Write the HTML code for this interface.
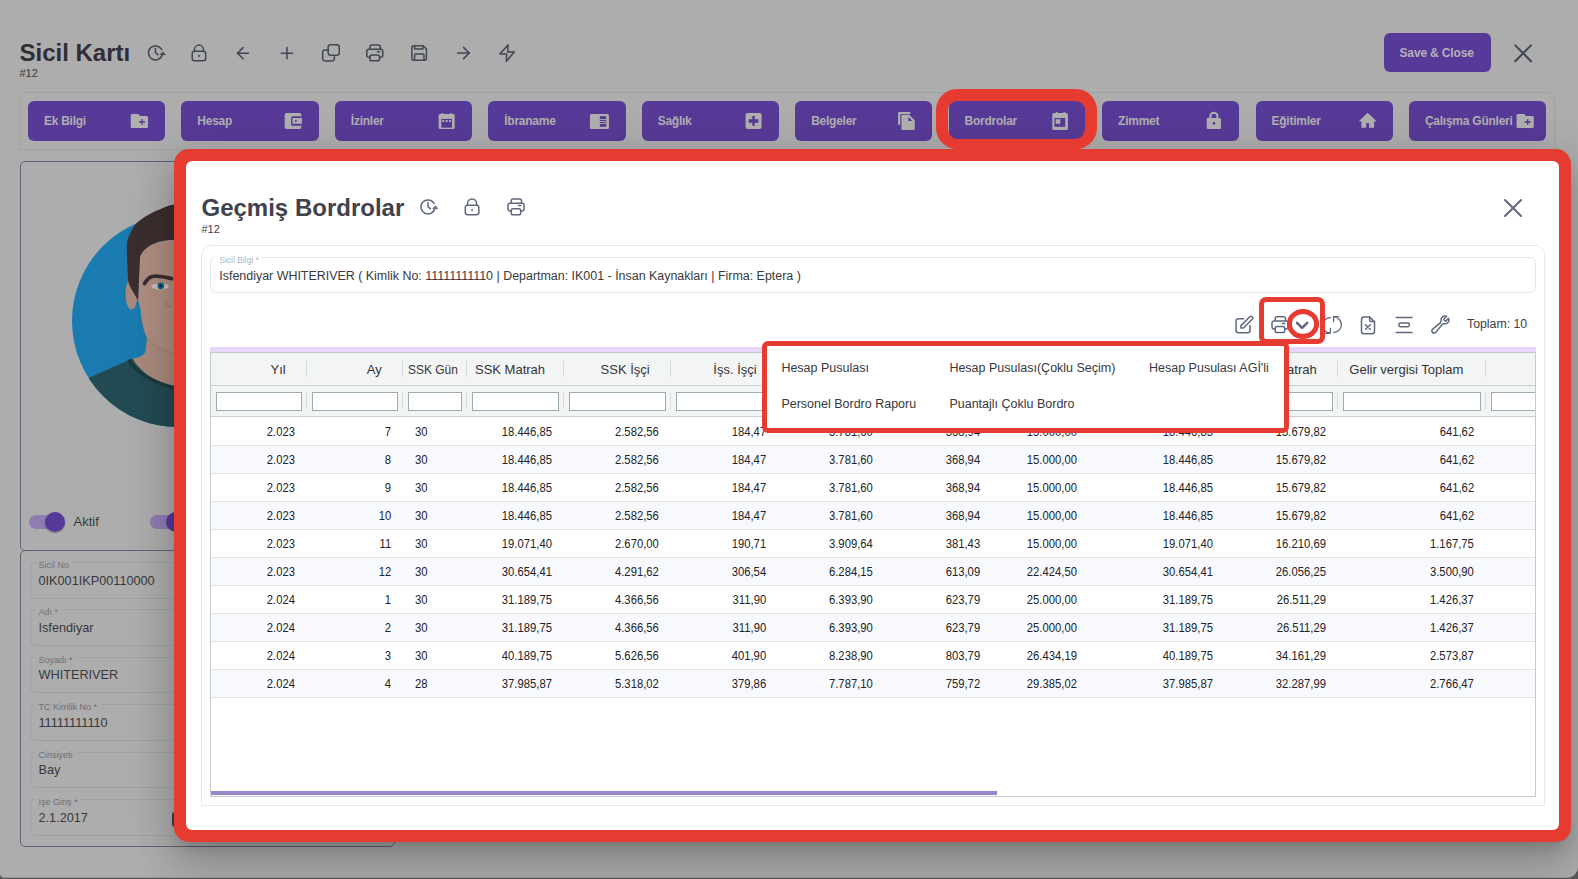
<!DOCTYPE html><html><head><meta charset="utf-8"><style>
html,body{margin:0;padding:0;}body{width:1578px;height:879px;overflow:hidden;position:relative;background:#adadad;font-family:"Liberation Sans", sans-serif;}
.t{position:absolute;white-space:nowrap;}
</style></head><body>
<div class="t" style="left:19.5px;top:42.60px;font-size:24px;line-height:20px;color:#2f2d38;font-weight:700;letter-spacing:0px;">Sicil Kartı</div>
<div class="t" style="left:19.5px;top:63.10px;font-size:11px;line-height:20px;color:#3a3a40;font-weight:400;letter-spacing:0px;">#12</div>
<div style="color:#404654">
<svg style="position:absolute;left:0;top:0" width="1578" height="879" viewBox="0 0 1578 879" fill="none" stroke="currentColor" stroke-width="1.5" stroke-linecap="round" stroke-linejoin="round"><g transform="translate(146 44)"><path d="M15.62 5.51 A7 7 0 1 0 16.43 9.87"/><path d="M17.1 7.9 L19.5 10.7 L14.4 10.5 Z" fill="currentColor" stroke="currentColor" stroke-width="0.6"/><path d="M9.45 4.6 V8.66 L11.9 10.7"/></g><g transform="translate(189.9 44.1)"><rect x="2.3" y="7.2" width="13.5" height="9.5" rx="2.2"/><path d="M4.5 7.2 V5.55 a4.55 4.55 0 0 1 9.1 0 V7.2"/><path d="M9.05 11.5 v1"/></g><path d="M237.5 53.2 H248.5"/><path d="M237.5 53.2 l5.6 -5.6"/><path d="M237.5 53.2 l5.6 5.6"/><path d="M287 47.6 V58.8"/><path d="M281.4 53.2 H292.6"/><rect x="328.15" y="44.65" width="11.1" height="10.7" rx="2.5"/><path d="M328.15 49.95 H325.15 a2.5 2.5 0 0 0 -2.5 2.5 V58.45 a2.5 2.5 0 0 0 2.5 2.5 H331.85 a2.5 2.5 0 0 0 2.5 -2.5 V56.85"/><g transform="translate(365.3 43.6)"><path d="M4.7 5.2 V3.3 a1.8 1.8 0 0 1 1.8 -1.8 h6.7 a1.8 1.8 0 0 1 1.8 1.8 V5.2"/><path d="M4.7 13.6 H3.3 a1.8 1.8 0 0 1 -1.8 -1.8 V7.7 a2 2 0 0 1 2 -2 H15.5 a2 2 0 0 1 2 2 V11.8 a1.8 1.8 0 0 1 -1.8 1.8 H14.2"/><rect x="4.7" y="11.3" width="9.5" height="5.9" rx="1.8"/><path d="M12 8.1 h2.4"/></g><path d="M413.85 45.75 H423.2 L426.45 49 V58.25 a2 2 0 0 1 -2 2 H413.85 a2 2 0 0 1 -2 -2 V47.75 a2 2 0 0 1 2 -2 z"/><path d="M414.6 45.9 V48.5 a.5 .5 0 0 0 .5 .5 H422.5 a.5 .5 0 0 0 .5 -.5 V45.9"/><path d="M414.6 60.1 V55 a1 1 0 0 1 1 -1 H423 a1 1 0 0 1 1 1 V60.1"/><path d="M457.6 53 H469.2"/><path d="M469.2 53 l-5.6 -5.6"/><path d="M469.2 53 l-5.6 5.6"/><path d="M508.1 44.8 L499.9 54.1 H506.6 L506.4 61.3 L514.3 51.9 H507.7 Z"/></svg>
</div>
<div style="position:absolute;left:1384px;top:33px;width:107px;height:38.5px;box-sizing:border-box;background:#573a97;border-radius:6px;"></div>
<div class="t" style="left:1399.5px;top:42.50px;font-size:12px;line-height:20px;color:#b4b1bb;font-weight:700;letter-spacing:-0.15px;">Save &amp; Close</div>
<svg style="position:absolute;left:0;top:0" width="1578" height="100" viewBox="0 0 1578 100" stroke="#3d4452" stroke-width="2" stroke-linecap="round"><path d="M1515.2 45.4 L1531 61.2 M1531 45.4 L1515.2 61.2"/></svg>
<div style="position:absolute;left:19px;top:92px;width:1536px;height:58px;box-sizing:border-box;border:1px solid #a0a3a6;border-radius:7px 7px 0 0;"></div>
<div style="position:absolute;left:28.0px;top:101px;width:137.2px;height:40px;box-sizing:border-box;background:#573a97;border-radius:6px;"></div>
<div class="t" style="left:43.9px;top:110.50px;font-size:12px;line-height:20px;color:#b0b0b0;font-weight:700;letter-spacing:-0.25px;">Ek Bilgi</div>
<svg style="position:absolute;left:28.00px;top:101px" width="137" height="40" viewBox="0 0 137 40" fill="#b0b0b0" stroke="none"><path d="M102.75 14.5 a1.5 1.5 0 0 1 1.5 -1.5 h6 l2 2 h6.25 a1.5 1.5 0 0 1 1.5 1.5 v9 a1.5 1.5 0 0 1 -1.5 1.5 h-14.25 a1.5 1.5 0 0 1 -1.5 -1.5 z"/><rect x="111" y="20.2" width="6" height="1.6" rx="0" fill="#573a97"/><rect x="113.3" y="18.2" width="1.4" height="5.6" rx="0" fill="#573a97"/></svg>
<div style="position:absolute;left:181.45px;top:101px;width:137.2px;height:40px;box-sizing:border-box;background:#573a97;border-radius:6px;"></div>
<div class="t" style="left:197.35px;top:110.50px;font-size:12px;line-height:20px;color:#b0b0b0;font-weight:700;letter-spacing:-0.25px;">Hesap</div>
<svg style="position:absolute;left:181.45px;top:101px" width="137" height="40" viewBox="0 0 137 40" fill="#b0b0b0" stroke="none"><rect x="103.65" y="11.9" width="16.7" height="16" rx="2" fill="#b0b0b0"/><path d="M110.1 16.8 a1.5 1.5 0 0 1 1.5 -1.5 h8.75 v9.45 h-8.75 a1.5 1.5 0 0 1 -1.5 -1.5z" fill="#573a97"/><rect x="111.45" y="17" width="9.4" height="5.8" rx="0" fill="#b0b0b0"/><circle cx="114.85" cy="19.9" r="1" fill="#573a97"/></svg>
<div style="position:absolute;left:334.9px;top:101px;width:137.2px;height:40px;box-sizing:border-box;background:#573a97;border-radius:6px;"></div>
<div class="t" style="left:350.8px;top:110.50px;font-size:12px;line-height:20px;color:#b0b0b0;font-weight:700;letter-spacing:-0.25px;">İzinler</div>
<svg style="position:absolute;left:334.90px;top:101px" width="137" height="40" viewBox="0 0 137 40" fill="#b0b0b0" stroke="none"><rect x="103.6" y="12.9" width="16.1" height="15" rx="1.5" fill="#b0b0b0"/><rect x="106.3" y="11.9" width="2" height="2.5" rx="1" fill="#b0b0b0"/><rect x="114.9" y="11.9" width="2" height="2.5" rx="1" fill="#b0b0b0"/><rect x="106.3" y="17.9" width="10.7" height="8.8" rx="0" fill="#573a97"/><rect x="107.2" y="19" width="2" height="2" rx="0" fill="#b0b0b0"/><rect x="110.6" y="19" width="2" height="2" rx="0" fill="#b0b0b0"/><rect x="114" y="19" width="2" height="2" rx="0" fill="#b0b0b0"/></svg>
<div style="position:absolute;left:488.35px;top:101px;width:137.2px;height:40px;box-sizing:border-box;background:#573a97;border-radius:6px;"></div>
<div class="t" style="left:504.25px;top:110.50px;font-size:12px;line-height:20px;color:#b0b0b0;font-weight:700;letter-spacing:-0.25px;">İbraname</div>
<svg style="position:absolute;left:488.35px;top:101px" width="137" height="40" viewBox="0 0 137 40" fill="#b0b0b0" stroke="none"><rect x="101.95" y="12.9" width="19" height="15" rx="1.5" fill="#b0b0b0"/><rect x="111.85" y="15.1" width="6.4" height="10.7" rx="0" fill="#573a97"/><rect x="111.85" y="18" width="6.4" height="0.9" rx="0" fill="#b0b0b0"/><rect x="111.85" y="20.1" width="6.4" height="0.9" rx="0" fill="#b0b0b0"/><rect x="111.85" y="22" width="6.4" height="0.9" rx="0" fill="#b0b0b0"/></svg>
<div style="position:absolute;left:641.8px;top:101px;width:137.2px;height:40px;box-sizing:border-box;background:#573a97;border-radius:6px;"></div>
<div class="t" style="left:657.7px;top:110.50px;font-size:12px;line-height:20px;color:#b0b0b0;font-weight:700;letter-spacing:-0.25px;">Sağlık</div>
<svg style="position:absolute;left:641.80px;top:101px" width="137" height="40" viewBox="0 0 137 40" fill="#b0b0b0" stroke="none"><rect x="103.6" y="11.9" width="16" height="16" rx="2" fill="#b0b0b0"/><rect x="106.7" y="18.2" width="9.7" height="3.6" rx="0" fill="#573a97"/><rect x="110.3" y="15" width="2.5" height="9.8" rx="0" fill="#573a97"/></svg>
<div style="position:absolute;left:795.25px;top:101px;width:137.2px;height:40px;box-sizing:border-box;background:#573a97;border-radius:6px;"></div>
<div class="t" style="left:811.15px;top:110.50px;font-size:12px;line-height:20px;color:#b0b0b0;font-weight:700;letter-spacing:-0.25px;">Belgeler</div>
<svg style="position:absolute;left:795.25px;top:101px" width="137" height="40" viewBox="0 0 137 40" fill="#b0b0b0" stroke="none"><path d="M103.05 23.8 v-11.8 a1 1 0 0 1 1 -1 h11.3 v2.2 h-10.1 v10.6z"/><path d="M106.45 15 a1 1 0 0 1 1 -1 h6.9 l5.4 5.3 v8.6 a1 1 0 0 1 -1 1 h-11.3 a1 1 0 0 1 -1 -1z"/><path d="M113.25 15.9 v4.1 h4.2z" fill="#573a97"/></svg>
<div style="position:absolute;left:948.7px;top:101px;width:137.2px;height:40px;box-sizing:border-box;background:#573a97;border-radius:6px;"></div>
<div class="t" style="left:964.6px;top:110.50px;font-size:12px;line-height:20px;color:#b0b0b0;font-weight:700;letter-spacing:-0.25px;">Bordrolar</div>
<svg style="position:absolute;left:948.70px;top:101px" width="137" height="40" viewBox="0 0 137 40" fill="#b0b0b0" stroke="none"><rect x="103.3" y="12" width="15.6" height="16.9" rx="1.5" fill="#b0b0b0"/><rect x="106.7" y="11" width="2" height="2.5" rx="1" fill="#b0b0b0"/><rect x="114.2" y="11" width="2" height="2.5" rx="1" fill="#b0b0b0"/><rect x="105.4" y="17" width="10.8" height="8.8" rx="0" fill="#573a97"/><rect x="106.7" y="18.2" width="4.6" height="4.6" rx="0" fill="#b0b0b0"/></svg>
<div style="position:absolute;left:1102.15px;top:101px;width:137.2px;height:40px;box-sizing:border-box;background:#573a97;border-radius:6px;"></div>
<div class="t" style="left:1118.05px;top:110.50px;font-size:12px;line-height:20px;color:#b0b0b0;font-weight:700;letter-spacing:-0.25px;">Zimmet</div>
<svg style="position:absolute;left:1102.15px;top:101px" width="137" height="40" viewBox="0 0 137 40" fill="#b0b0b0" stroke="none"><path d="M107.45 17.5 v-2.5 a4.45 4.2 0 0 1 8.9 0 v2.5 h-2 v-2.5 a2.45 2.2 0 0 0 -4.9 0 v2.5z"/><rect x="104.75" y="17.1" width="14.2" height="10.8" rx="1" fill="#b0b0b0"/><circle cx="111.95" cy="22.4" r="1.3" fill="#573a97"/></svg>
<div style="position:absolute;left:1255.6px;top:101px;width:137.2px;height:40px;box-sizing:border-box;background:#573a97;border-radius:6px;"></div>
<div class="t" style="left:1271.5px;top:110.50px;font-size:12px;line-height:20px;color:#b0b0b0;font-weight:700;letter-spacing:-0.25px;">Eğitimler</div>
<svg style="position:absolute;left:1255.60px;top:101px" width="137" height="40" viewBox="0 0 137 40" fill="#b0b0b0" stroke="none"><path d="M111.65 11.8 L120.6 20.2 L118.1 20.5 V26.8 H113.1 V22 H110.2 V26.8 H105.4 V20.5 L102.7 20.2 Z"/></svg>
<div style="position:absolute;left:1409.05px;top:101px;width:137.2px;height:40px;box-sizing:border-box;background:#573a97;border-radius:6px;"></div>
<div class="t" style="left:1424.95px;top:110.50px;font-size:12px;line-height:20px;color:#b0b0b0;font-weight:700;letter-spacing:-0.25px;">Çalışma Günleri</div>
<svg style="position:absolute;left:1409.05px;top:101px" width="137" height="40" viewBox="0 0 137 40" fill="#b0b0b0" stroke="none"><path d="M107.55 14.5 a1.5 1.5 0 0 1 1.5 -1.5 h6 l2 2 h6.25 a1.5 1.5 0 0 1 1.5 1.5 v9 a1.5 1.5 0 0 1 -1.5 1.5 h-14.25 a1.5 1.5 0 0 1 -1.5 -1.5 z"/><rect x="115.65" y="20.2" width="6" height="1.6" rx="0" fill="#573a97"/><rect x="117.95" y="18.2" width="1.4" height="5.6" rx="0" fill="#573a97"/></svg>
<div style="position:absolute;left:20px;top:161px;width:375px;height:389.5px;box-sizing:border-box;border:1.5px solid #5a6675;border-radius:5px;"></div>
<svg style="position:absolute;left:0;top:0" width="180" height="440" viewBox="0 0 180 440">
<defs><clipPath id="cc"><circle cx="178" cy="321" r="106"/></clipPath></defs>
<circle cx="178" cy="321" r="106" fill="#1a7bb0"/>
<g clip-path="url(#cc)">
<path d="M146.9 337.8 L145.3 352 C143 356 138 358 132.5 358.5 C140 372 155 383 180 388 L180 330 Z" fill="#a98a7d"/>
<path d="M40 440 L60 420 L89.6 377.6 L132.5 358.5 C140 372 155 383 180 388 L180 440 Z" fill="#234b53"/>
<path d="M129 359.5 C134 370 150 383 180 389" stroke="#1b3a40" stroke-width="3.5" fill="none"/>
</g>
<ellipse cx="131.5" cy="294" rx="6" ry="15.5" fill="#a9897c"/>
<path d="M180 239.8 L174 239.8 C160 240 146 244 140 256 L138 300 L140.5 309 C141.5 318 142 327 146.9 337.8 C155 346 165 351 180 354 Z" fill="#ae8e81"/>
<path d="M146.9 337.8 C155 347 165 352 180 354" stroke="#9d7a6c" stroke-width="0.8" fill="none"/>
<path d="M168.5 205.8 L180 203 L180 239.8 L174 239.8 C160 240 146 244 140 256 L138 300 C133 292 128 285 127.9 278.6 L126.7 247.6 C127 240 129 235 130.9 232 C133 227 136 223 138.7 221.3 C148 214 158 210 168.5 205.8 Z" fill="#3b2e2e"/>
<path d="M144.6 283.4 C148 278 151 276.2 154.2 276.2 C160 276 166 277 171.5 278.6" stroke="#3b2e2e" stroke-width="3.8" fill="none" stroke-linecap="round"/>
<ellipse cx="160" cy="286.4" rx="8.5" ry="3" fill="#c8bfbb"/><circle cx="160.8" cy="285.9" r="3.3" fill="#185f85"/><circle cx="160.8" cy="285.9" r="1.3" fill="#0d2a3a"/>
<path d="M167 300 C164.5 303 166 307 170.5 306.5" stroke="#8e7064" stroke-width="1" fill="none"/>
<ellipse cx="171" cy="323.4" rx="8" ry="2.8" fill="#b38a80"/>
</svg>
<div style="position:absolute;left:29px;top:514.7px;width:36px;height:14px;box-sizing:border-box;background:#8f7cb3;border-radius:7px;"></div>
<div style="position:absolute;left:45px;top:511.7px;width:20px;height:20px;box-sizing:border-box;background:#553a98;border-radius:50%;box-shadow:0 1px 2px rgba(0,0,0,.3);"></div>
<div class="t" style="left:73.5px;top:511.70px;font-size:13px;line-height:20px;color:#3a3a3e;font-weight:400;letter-spacing:0px;">Aktif</div>
<div style="position:absolute;left:150px;top:514.7px;width:36px;height:14px;box-sizing:border-box;background:#8f7cb3;border-radius:7px;"></div>
<div style="position:absolute;left:166px;top:511.7px;width:20px;height:20px;box-sizing:border-box;background:#553a98;border-radius:50%;"></div>
<div style="position:absolute;left:20px;top:550px;width:375px;height:297px;box-sizing:border-box;border:1.5px solid #5a6675;border-radius:5px;"></div>
<div style="position:absolute;left:29.5px;top:562.0px;width:360px;height:36.5px;box-sizing:border-box;border:1px solid #9ea2a7;border-radius:5px;"></div>
<div class="t" style="left:34.5px;top:561.80px;font-size:9px;line-height:6px;color:#6f7075;font-weight:400;letter-spacing:0px;background:#adadad;padding:0 3.5px 0 4px;">Sicil No</div>
<div class="t" style="left:38.5px;top:570.50px;font-size:12.7px;line-height:20px;color:#38383c;font-weight:400;letter-spacing:0px;">0IK001IKP00110000</div>
<div style="position:absolute;left:29.5px;top:609.45px;width:360px;height:36.5px;box-sizing:border-box;border:1px solid #9ea2a7;border-radius:5px;"></div>
<div class="t" style="left:34.5px;top:609.25px;font-size:9px;line-height:6px;color:#6f7075;font-weight:400;letter-spacing:0px;background:#adadad;padding:0 3.5px 0 4px;">Adı *</div>
<div class="t" style="left:38.5px;top:617.95px;font-size:12.7px;line-height:20px;color:#38383c;font-weight:400;letter-spacing:0px;">Isfendiyar</div>
<div style="position:absolute;left:29.5px;top:656.9px;width:360px;height:36.5px;box-sizing:border-box;border:1px solid #9ea2a7;border-radius:5px;"></div>
<div class="t" style="left:34.5px;top:656.70px;font-size:9px;line-height:6px;color:#6f7075;font-weight:400;letter-spacing:0px;background:#adadad;padding:0 3.5px 0 4px;">Soyadı *</div>
<div class="t" style="left:38.5px;top:665.40px;font-size:12.7px;line-height:20px;color:#38383c;font-weight:400;letter-spacing:0px;">WHITERIVER</div>
<div style="position:absolute;left:29.5px;top:704.35px;width:360px;height:36.5px;box-sizing:border-box;border:1px solid #9ea2a7;border-radius:5px;"></div>
<div class="t" style="left:34.5px;top:704.15px;font-size:9px;line-height:6px;color:#6f7075;font-weight:400;letter-spacing:0px;background:#adadad;padding:0 3.5px 0 4px;">TC Kimlik No *</div>
<div class="t" style="left:38.5px;top:712.85px;font-size:12.7px;line-height:20px;color:#38383c;font-weight:400;letter-spacing:0px;">11111111110</div>
<div style="position:absolute;left:29.5px;top:751.8px;width:360px;height:36.5px;box-sizing:border-box;border:1px solid #9ea2a7;border-radius:5px;"></div>
<div class="t" style="left:34.5px;top:751.60px;font-size:9px;line-height:6px;color:#6f7075;font-weight:400;letter-spacing:0px;background:#adadad;padding:0 3.5px 0 4px;">Cinsiyeti</div>
<div class="t" style="left:38.5px;top:760.30px;font-size:12.7px;line-height:20px;color:#38383c;font-weight:400;letter-spacing:0px;">Bay</div>
<div style="position:absolute;left:29.5px;top:799.25px;width:360px;height:36.5px;box-sizing:border-box;border:1px solid #9ea2a7;border-radius:5px;"></div>
<div class="t" style="left:34.5px;top:799.05px;font-size:9px;line-height:6px;color:#6f7075;font-weight:400;letter-spacing:0px;background:#adadad;padding:0 3.5px 0 4px;">Işe Giriş *</div>
<div class="t" style="left:38.5px;top:807.75px;font-size:12.7px;line-height:20px;color:#38383c;font-weight:400;letter-spacing:0px;">2.1.2017</div>
<div style="position:absolute;left:172.3px;top:811.5px;width:6px;height:15px;box-sizing:border-box;background:#3c4350;border-radius:3px;"></div>
<div style="position:absolute;left:174px;top:149px;width:1397px;height:693px;box-sizing:border-box;background:#e53b30;border-radius:15px;box-shadow:0 11px 15px -7px rgba(0,0,0,.16),0 24px 38px 3px rgba(0,0,0,.12),0 9px 46px 8px rgba(0,0,0,.11);"></div>
<div style="position:absolute;left:186px;top:161px;width:1373px;height:669px;box-sizing:border-box;background:#fff;border-radius:6px;"></div>
<div class="t" style="left:201.5px;top:197.60px;font-size:24px;line-height:20px;color:#42414d;font-weight:700;letter-spacing:0px;">Geçmiş Bordrolar</div>
<div class="t" style="left:201.5px;top:219.20px;font-size:11px;line-height:20px;color:#3d3c48;font-weight:400;letter-spacing:0px;">#12</div>
<svg style="position:absolute;left:0;top:0" width="1578" height="300" viewBox="0 0 1578 300" stroke="#5f6a7e" stroke-width="2" stroke-linecap="round"><path d="M1505 200 L1521.1 216 M1521.1 200 L1505 216"/></svg>
<div style="position:absolute;left:201px;top:245px;width:1344px;height:561px;box-sizing:border-box;border:1px solid #e8e9ef;border-radius:10px 10px 0 0;"></div>
<div style="position:absolute;left:210px;top:257px;width:1326px;height:36px;box-sizing:border-box;border:1px solid #e4e6eb;border-radius:6px;"></div>
<div class="t" style="left:215.3px;top:256.60px;font-size:8.5px;line-height:6px;color:#b3b3b8;font-weight:400;letter-spacing:0px;background:#fff;padding:0 3.5px 0 4px;">Sicil Bilgi *</div>
<div class="t" style="left:219.3px;top:265.60px;font-size:12.45px;line-height:20px;color:#3a3a40;font-weight:400;letter-spacing:0px;">Isfendiyar WHITERIVER ( Kimlik No: 11111111110 | Departman: IK001 - İnsan Kaynakları | Firma: Eptera )</div>
<div style="color:#5e697d">
<svg style="position:absolute;left:0;top:0" width="1578" height="879" viewBox="0 0 1578 879" fill="none" stroke="currentColor" stroke-width="1.5" stroke-linecap="round" stroke-linejoin="round"><g transform="translate(418.5 198)"><path d="M15.62 5.51 A7 7 0 1 0 16.43 9.87"/><path d="M17.1 7.9 L19.5 10.7 L14.4 10.5 Z" fill="currentColor" stroke="currentColor" stroke-width="0.6"/><path d="M9.45 4.6 V8.66 L11.9 10.7"/></g><g transform="translate(463 198)"><rect x="2.3" y="7.2" width="13.5" height="9.5" rx="2.2"/><path d="M4.5 7.2 V5.55 a4.55 4.55 0 0 1 9.1 0 V7.2"/><path d="M9.05 11.5 v1"/></g><g transform="translate(506.5 197.5)"><path d="M4.7 5.2 V3.3 a1.8 1.8 0 0 1 1.8 -1.8 h6.7 a1.8 1.8 0 0 1 1.8 1.8 V5.2"/><path d="M4.7 13.6 H3.3 a1.8 1.8 0 0 1 -1.8 -1.8 V7.7 a2 2 0 0 1 2 -2 H15.5 a2 2 0 0 1 2 2 V11.8 a1.8 1.8 0 0 1 -1.8 1.8 H14.2"/><rect x="4.7" y="11.3" width="9.5" height="5.9" rx="1.8"/><path d="M12 8.1 h2.4"/></g><g transform="translate(1230 310)"><path d="M13.6 8.75 H8.55 a2.5 2.5 0 0 0 -2.5 2.5 V20.25 a2.5 2.5 0 0 0 2.5 2.5 H17.55 a2.5 2.5 0 0 0 2.5 -2.5 V15.4"/><path d="M10.9 18 V15.6 L19.8 6.8 a1.75 1.75 0 0 1 2.5 2.5 L13.4 18 Z"/></g><g transform="translate(1270.5 315.3)"><path d="M4.7 5.2 V3.3 a1.8 1.8 0 0 1 1.8 -1.8 h6.7 a1.8 1.8 0 0 1 1.8 1.8 V5.2"/><path d="M4.7 13.6 H3.3 a1.8 1.8 0 0 1 -1.8 -1.8 V7.7 a2 2 0 0 1 2 -2 H15.5 a2 2 0 0 1 2 2 V11.8 a1.8 1.8 0 0 1 -1.8 1.8 H14.2"/><rect x="4.7" y="11.3" width="9.5" height="5.9" rx="1.8"/><path d="M12 8.1 h2.4"/></g><path d="M1297 322.8 L1302.1 327.9 L1307.2 322.8" stroke-width="2.6"/><g transform="translate(1322 315) scale(0.8333)"><path d="M10.3 3.2 A9 9 0 0 0 9.6 21.6"/><path d="M4 22 H10 V16"/><path d="M13.7 20.8 A9 9 0 0 0 14.4 2.4"/><path d="M20.2 2 H13.9 V8"/></g><g transform="translate(1355 308)"><path d="M14.6 8.95 h-5.6 a2.5 2.5 0 0 0 -2.5 2.5 v11.75 a2.5 2.5 0 0 0 2.5 2.5 h8 a2.5 2.5 0 0 0 2.5 -2.5 v-9.4 z"/><path d="M14.6 8.95 v3 a1.5 1.5 0 0 0 1.5 1.5 h3.4"/><path d="M10.5 16.8 l4.9 4.5 m0 -4.5 l-4.9 4.5"/></g><g transform="translate(1355 308)"><path d="M41.2 9.5 H57"/><path d="M41.2 24.4 H57"/><rect x="43.85" y="15.05" width="10.5" height="3.8" rx="1.6"/></g><g transform="translate(1429.9 314) scale(0.875)" stroke-width="1.75"><path d="M21.75 6.75a4.5 4.5 0 01-4.884 4.484c-1.076-.091-2.264.071-2.95.904l-7.152 8.684a2.548 2.548 0 11-3.586-3.586l8.684-7.152c.833-.686.995-1.874.904-2.95a4.5 4.5 0 016.336-4.486l-3.276 3.276a3.004 3.004 0 002.25 2.25l3.276-3.276c.256.565.398 1.192.398 1.852z"/></g></svg>
</div>
<div class="t" style="left:1467px;top:313.50px;font-size:12.3px;line-height:20px;color:#3d3d45;font-weight:400;letter-spacing:0px;">Toplam: 10</div>
<div style="position:absolute;left:210px;top:347px;width:1326px;height:5px;box-sizing:border-box;background:#e7d6f9;"></div>
<div style="position:absolute;left:210px;top:352px;width:1326px;height:445px;box-sizing:border-box;border:1px solid #c3cbcc;border-top:1px solid #bfc8c8;"></div>
<div style="position:absolute;left:211px;top:352.5px;width:1324px;height:63.5px;box-sizing:border-box;background:#f3f5f5;"></div>
<div style="position:absolute;left:211px;top:385px;width:1324px;height:1px;box-sizing:border-box;background:#c9d0d1;"></div>
<div style="position:absolute;left:211px;top:416px;width:1324px;height:1px;box-sizing:border-box;background:#c9d0d1;"></div>
<div class="t" style="right:1292.3px;top:360.30px;font-size:13px;line-height:20px;color:#333337;font-weight:400;letter-spacing:0px;text-align:right;">Yıl</div>
<div style="position:absolute;left:216.2px;top:392.3px;width:85.5px;height:18.5px;box-sizing:border-box;border:1px solid #9cacad;background:#fff;"></div>
<div style="position:absolute;left:306.0px;top:361px;width:1px;height:16px;box-sizing:border-box;background:#d6dcdc;"></div>
<div style="position:absolute;left:306.0px;top:393px;width:1px;height:16px;box-sizing:border-box;background:#d6dcdc;"></div>
<div class="t" style="right:1196.3px;top:360.30px;font-size:13px;line-height:20px;color:#333337;font-weight:400;letter-spacing:0px;text-align:right;">Ay</div>
<div style="position:absolute;left:311.7px;top:392.3px;width:86.0px;height:18.5px;box-sizing:border-box;border:1px solid #9cacad;background:#fff;"></div>
<div style="position:absolute;left:402.0px;top:361px;width:1px;height:16px;box-sizing:border-box;background:#d6dcdc;"></div>
<div style="position:absolute;left:402.0px;top:393px;width:1px;height:16px;box-sizing:border-box;background:#d6dcdc;"></div>
<div class="t" style="left:408px;top:360.30px;font-size:13px;line-height:20px;color:#333337;font-weight:400;letter-spacing:0px;transform:scaleX(0.92);transform-origin:0 50%;">SSK Gün</div>
<div style="position:absolute;left:407.7px;top:392.3px;width:54.0px;height:18.5px;box-sizing:border-box;border:1px solid #9cacad;background:#fff;"></div>
<div style="position:absolute;left:466.0px;top:361px;width:1px;height:16px;box-sizing:border-box;background:#d6dcdc;"></div>
<div style="position:absolute;left:466.0px;top:393px;width:1px;height:16px;box-sizing:border-box;background:#d6dcdc;"></div>
<div class="t" style="left:475px;top:360.30px;font-size:13px;line-height:20px;color:#333337;font-weight:400;letter-spacing:0px;">SSK Matrah</div>
<div style="position:absolute;left:471.7px;top:392.3px;width:87.0px;height:18.5px;box-sizing:border-box;border:1px solid #9cacad;background:#fff;"></div>
<div style="position:absolute;left:563.0px;top:361px;width:1px;height:16px;box-sizing:border-box;background:#d6dcdc;"></div>
<div style="position:absolute;left:563.0px;top:393px;width:1px;height:16px;box-sizing:border-box;background:#d6dcdc;"></div>
<div class="t" style="right:928.3px;top:360.30px;font-size:13px;line-height:20px;color:#333337;font-weight:400;letter-spacing:0px;text-align:right;">SSK İşçi</div>
<div style="position:absolute;left:568.7px;top:392.3px;width:97.0px;height:18.5px;box-sizing:border-box;border:1px solid #9cacad;background:#fff;"></div>
<div style="position:absolute;left:670.0px;top:361px;width:1px;height:16px;box-sizing:border-box;background:#d6dcdc;"></div>
<div style="position:absolute;left:670.0px;top:393px;width:1px;height:16px;box-sizing:border-box;background:#d6dcdc;"></div>
<div class="t" style="right:821.3px;top:360.30px;font-size:13px;line-height:20px;color:#333337;font-weight:400;letter-spacing:0px;text-align:right;">İşs. İşçi</div>
<div style="position:absolute;left:675.7px;top:392.3px;width:97.0px;height:18.5px;box-sizing:border-box;border:1px solid #9cacad;background:#fff;"></div>
<div style="position:absolute;left:777.0px;top:361px;width:1px;height:16px;box-sizing:border-box;background:#d6dcdc;"></div>
<div style="position:absolute;left:777.0px;top:393px;width:1px;height:16px;box-sizing:border-box;background:#d6dcdc;"></div>
<div class="t" style="right:714.3px;top:360.30px;font-size:13px;line-height:20px;color:#333337;font-weight:400;letter-spacing:0px;text-align:right;">SSK İşveren</div>
<div style="position:absolute;left:782.7px;top:392.3px;width:97.0px;height:18.5px;box-sizing:border-box;border:1px solid #9cacad;background:#fff;"></div>
<div style="position:absolute;left:884.0px;top:361px;width:1px;height:16px;box-sizing:border-box;background:#d6dcdc;"></div>
<div style="position:absolute;left:884.0px;top:393px;width:1px;height:16px;box-sizing:border-box;background:#d6dcdc;"></div>
<div class="t" style="right:607.3px;top:360.30px;font-size:13px;line-height:20px;color:#333337;font-weight:400;letter-spacing:0px;text-align:right;">İşs. İşveren</div>
<div style="position:absolute;left:889.7px;top:392.3px;width:97.0px;height:18.5px;box-sizing:border-box;border:1px solid #9cacad;background:#fff;"></div>
<div style="position:absolute;left:991.0px;top:361px;width:1px;height:16px;box-sizing:border-box;background:#d6dcdc;"></div>
<div style="position:absolute;left:991.0px;top:393px;width:1px;height:16px;box-sizing:border-box;background:#d6dcdc;"></div>
<div class="t" style="right:510.29999999999995px;top:360.30px;font-size:13px;line-height:20px;color:#333337;font-weight:400;letter-spacing:0px;text-align:right;">Asgari Ücret</div>
<div style="position:absolute;left:996.7px;top:392.3px;width:87.0px;height:18.5px;box-sizing:border-box;border:1px solid #9cacad;background:#fff;"></div>
<div style="position:absolute;left:1088.0px;top:361px;width:1px;height:16px;box-sizing:border-box;background:#d6dcdc;"></div>
<div style="position:absolute;left:1088.0px;top:393px;width:1px;height:16px;box-sizing:border-box;background:#d6dcdc;"></div>
<div class="t" style="right:374.29999999999995px;top:360.30px;font-size:13px;line-height:20px;color:#333337;font-weight:400;letter-spacing:0px;text-align:right;">Vergi Matrah</div>
<div style="position:absolute;left:1093.7px;top:392.3px;width:126.0px;height:18.5px;box-sizing:border-box;border:1px solid #9cacad;background:#fff;"></div>
<div style="position:absolute;left:1224.0px;top:361px;width:1px;height:16px;box-sizing:border-box;background:#d6dcdc;"></div>
<div style="position:absolute;left:1224.0px;top:393px;width:1px;height:16px;box-sizing:border-box;background:#d6dcdc;"></div>
<div class="t" style="right:261.29999999999995px;top:360.30px;font-size:13px;line-height:20px;color:#333337;font-weight:400;letter-spacing:0px;text-align:right;">GV Matrah</div>
<div style="position:absolute;left:1229.7px;top:392.3px;width:103.0px;height:18.5px;box-sizing:border-box;border:1px solid #9cacad;background:#fff;"></div>
<div style="position:absolute;left:1337.0px;top:361px;width:1px;height:16px;box-sizing:border-box;background:#d6dcdc;"></div>
<div style="position:absolute;left:1337.0px;top:393px;width:1px;height:16px;box-sizing:border-box;background:#d6dcdc;"></div>
<div class="t" style="left:1349.3px;top:360.30px;font-size:13px;line-height:20px;color:#333337;font-weight:400;letter-spacing:0px;">Gelir vergisi Toplam</div>
<div style="position:absolute;left:1342.7px;top:392.3px;width:138.0px;height:18.5px;box-sizing:border-box;border:1px solid #9cacad;background:#fff;"></div>
<div style="position:absolute;left:1485.0px;top:361px;width:1px;height:16px;box-sizing:border-box;background:#d6dcdc;"></div>
<div style="position:absolute;left:1485.0px;top:393px;width:1px;height:16px;box-sizing:border-box;background:#d6dcdc;"></div>
<div style="position:absolute;left:1490.7px;top:392.3px;width:44.3px;height:18.5px;box-sizing:border-box;border:1px solid #9cacad;background:#fff;border-right:none;"></div>
<div style="position:absolute;left:211px;top:445px;width:1324px;height:28px;box-sizing:border-box;background:#f8f9fc;"></div>
<div style="position:absolute;left:211px;top:501px;width:1324px;height:28px;box-sizing:border-box;background:#f8f9fc;"></div>
<div style="position:absolute;left:211px;top:557px;width:1324px;height:28px;box-sizing:border-box;background:#f8f9fc;"></div>
<div style="position:absolute;left:211px;top:613px;width:1324px;height:28px;box-sizing:border-box;background:#f8f9fc;"></div>
<div style="position:absolute;left:211px;top:669px;width:1324px;height:28px;box-sizing:border-box;background:#f8f9fc;"></div>
<div style="position:absolute;left:211px;top:445px;width:1324px;height:1px;box-sizing:border-box;background:#dfe3e6;"></div>
<div style="position:absolute;left:211px;top:473px;width:1324px;height:1px;box-sizing:border-box;background:#dfe3e6;"></div>
<div style="position:absolute;left:211px;top:501px;width:1324px;height:1px;box-sizing:border-box;background:#dfe3e6;"></div>
<div style="position:absolute;left:211px;top:529px;width:1324px;height:1px;box-sizing:border-box;background:#dfe3e6;"></div>
<div style="position:absolute;left:211px;top:557px;width:1324px;height:1px;box-sizing:border-box;background:#dfe3e6;"></div>
<div style="position:absolute;left:211px;top:585px;width:1324px;height:1px;box-sizing:border-box;background:#dfe3e6;"></div>
<div style="position:absolute;left:211px;top:613px;width:1324px;height:1px;box-sizing:border-box;background:#dfe3e6;"></div>
<div style="position:absolute;left:211px;top:641px;width:1324px;height:1px;box-sizing:border-box;background:#dfe3e6;"></div>
<div style="position:absolute;left:211px;top:669px;width:1324px;height:1px;box-sizing:border-box;background:#dfe3e6;"></div>
<div style="position:absolute;left:211px;top:697px;width:1324px;height:1px;box-sizing:border-box;background:#dfe3e6;"></div>
<div class="t" style="right:1283.1px;top:421.90px;font-size:12.8px;line-height:20px;color:#222226;font-weight:400;letter-spacing:0px;text-align:right;transform:scaleX(0.88);transform-origin:100% 50%;">2.023</div>
<div class="t" style="right:1187.1px;top:421.90px;font-size:12.8px;line-height:20px;color:#222226;font-weight:400;letter-spacing:0px;text-align:right;transform:scaleX(0.88);transform-origin:100% 50%;">7</div>
<div class="t" style="left:415px;top:421.90px;font-size:12.8px;line-height:20px;color:#222226;font-weight:400;letter-spacing:0px;transform:scaleX(0.88);transform-origin:0 50%;">30</div>
<div class="t" style="right:1026.1px;top:421.90px;font-size:12.8px;line-height:20px;color:#222226;font-weight:400;letter-spacing:0px;text-align:right;transform:scaleX(0.88);transform-origin:100% 50%;">18.446,85</div>
<div class="t" style="right:919.1px;top:421.90px;font-size:12.8px;line-height:20px;color:#222226;font-weight:400;letter-spacing:0px;text-align:right;transform:scaleX(0.88);transform-origin:100% 50%;">2.582,56</div>
<div class="t" style="right:812.1px;top:421.90px;font-size:12.8px;line-height:20px;color:#222226;font-weight:400;letter-spacing:0px;text-align:right;transform:scaleX(0.88);transform-origin:100% 50%;">184,47</div>
<div class="t" style="right:705.1px;top:421.90px;font-size:12.8px;line-height:20px;color:#222226;font-weight:400;letter-spacing:0px;text-align:right;transform:scaleX(0.88);transform-origin:100% 50%;">3.781,60</div>
<div class="t" style="right:598.1px;top:421.90px;font-size:12.8px;line-height:20px;color:#222226;font-weight:400;letter-spacing:0px;text-align:right;transform:scaleX(0.88);transform-origin:100% 50%;">368,94</div>
<div class="t" style="right:501.0999999999999px;top:421.90px;font-size:12.8px;line-height:20px;color:#222226;font-weight:400;letter-spacing:0px;text-align:right;transform:scaleX(0.88);transform-origin:100% 50%;">15.000,00</div>
<div class="t" style="right:365.0999999999999px;top:421.90px;font-size:12.8px;line-height:20px;color:#222226;font-weight:400;letter-spacing:0px;text-align:right;transform:scaleX(0.88);transform-origin:100% 50%;">18.446,85</div>
<div class="t" style="right:252.0999999999999px;top:421.90px;font-size:12.8px;line-height:20px;color:#222226;font-weight:400;letter-spacing:0px;text-align:right;transform:scaleX(0.88);transform-origin:100% 50%;">15.679,82</div>
<div class="t" style="right:104.09999999999991px;top:421.90px;font-size:12.8px;line-height:20px;color:#222226;font-weight:400;letter-spacing:0px;text-align:right;transform:scaleX(0.88);transform-origin:100% 50%;">641,62</div>
<div class="t" style="right:1283.1px;top:449.90px;font-size:12.8px;line-height:20px;color:#222226;font-weight:400;letter-spacing:0px;text-align:right;transform:scaleX(0.88);transform-origin:100% 50%;">2.023</div>
<div class="t" style="right:1187.1px;top:449.90px;font-size:12.8px;line-height:20px;color:#222226;font-weight:400;letter-spacing:0px;text-align:right;transform:scaleX(0.88);transform-origin:100% 50%;">8</div>
<div class="t" style="left:415px;top:449.90px;font-size:12.8px;line-height:20px;color:#222226;font-weight:400;letter-spacing:0px;transform:scaleX(0.88);transform-origin:0 50%;">30</div>
<div class="t" style="right:1026.1px;top:449.90px;font-size:12.8px;line-height:20px;color:#222226;font-weight:400;letter-spacing:0px;text-align:right;transform:scaleX(0.88);transform-origin:100% 50%;">18.446,85</div>
<div class="t" style="right:919.1px;top:449.90px;font-size:12.8px;line-height:20px;color:#222226;font-weight:400;letter-spacing:0px;text-align:right;transform:scaleX(0.88);transform-origin:100% 50%;">2.582,56</div>
<div class="t" style="right:812.1px;top:449.90px;font-size:12.8px;line-height:20px;color:#222226;font-weight:400;letter-spacing:0px;text-align:right;transform:scaleX(0.88);transform-origin:100% 50%;">184,47</div>
<div class="t" style="right:705.1px;top:449.90px;font-size:12.8px;line-height:20px;color:#222226;font-weight:400;letter-spacing:0px;text-align:right;transform:scaleX(0.88);transform-origin:100% 50%;">3.781,60</div>
<div class="t" style="right:598.1px;top:449.90px;font-size:12.8px;line-height:20px;color:#222226;font-weight:400;letter-spacing:0px;text-align:right;transform:scaleX(0.88);transform-origin:100% 50%;">368,94</div>
<div class="t" style="right:501.0999999999999px;top:449.90px;font-size:12.8px;line-height:20px;color:#222226;font-weight:400;letter-spacing:0px;text-align:right;transform:scaleX(0.88);transform-origin:100% 50%;">15.000,00</div>
<div class="t" style="right:365.0999999999999px;top:449.90px;font-size:12.8px;line-height:20px;color:#222226;font-weight:400;letter-spacing:0px;text-align:right;transform:scaleX(0.88);transform-origin:100% 50%;">18.446,85</div>
<div class="t" style="right:252.0999999999999px;top:449.90px;font-size:12.8px;line-height:20px;color:#222226;font-weight:400;letter-spacing:0px;text-align:right;transform:scaleX(0.88);transform-origin:100% 50%;">15.679,82</div>
<div class="t" style="right:104.09999999999991px;top:449.90px;font-size:12.8px;line-height:20px;color:#222226;font-weight:400;letter-spacing:0px;text-align:right;transform:scaleX(0.88);transform-origin:100% 50%;">641,62</div>
<div class="t" style="right:1283.1px;top:477.90px;font-size:12.8px;line-height:20px;color:#222226;font-weight:400;letter-spacing:0px;text-align:right;transform:scaleX(0.88);transform-origin:100% 50%;">2.023</div>
<div class="t" style="right:1187.1px;top:477.90px;font-size:12.8px;line-height:20px;color:#222226;font-weight:400;letter-spacing:0px;text-align:right;transform:scaleX(0.88);transform-origin:100% 50%;">9</div>
<div class="t" style="left:415px;top:477.90px;font-size:12.8px;line-height:20px;color:#222226;font-weight:400;letter-spacing:0px;transform:scaleX(0.88);transform-origin:0 50%;">30</div>
<div class="t" style="right:1026.1px;top:477.90px;font-size:12.8px;line-height:20px;color:#222226;font-weight:400;letter-spacing:0px;text-align:right;transform:scaleX(0.88);transform-origin:100% 50%;">18.446,85</div>
<div class="t" style="right:919.1px;top:477.90px;font-size:12.8px;line-height:20px;color:#222226;font-weight:400;letter-spacing:0px;text-align:right;transform:scaleX(0.88);transform-origin:100% 50%;">2.582,56</div>
<div class="t" style="right:812.1px;top:477.90px;font-size:12.8px;line-height:20px;color:#222226;font-weight:400;letter-spacing:0px;text-align:right;transform:scaleX(0.88);transform-origin:100% 50%;">184,47</div>
<div class="t" style="right:705.1px;top:477.90px;font-size:12.8px;line-height:20px;color:#222226;font-weight:400;letter-spacing:0px;text-align:right;transform:scaleX(0.88);transform-origin:100% 50%;">3.781,60</div>
<div class="t" style="right:598.1px;top:477.90px;font-size:12.8px;line-height:20px;color:#222226;font-weight:400;letter-spacing:0px;text-align:right;transform:scaleX(0.88);transform-origin:100% 50%;">368,94</div>
<div class="t" style="right:501.0999999999999px;top:477.90px;font-size:12.8px;line-height:20px;color:#222226;font-weight:400;letter-spacing:0px;text-align:right;transform:scaleX(0.88);transform-origin:100% 50%;">15.000,00</div>
<div class="t" style="right:365.0999999999999px;top:477.90px;font-size:12.8px;line-height:20px;color:#222226;font-weight:400;letter-spacing:0px;text-align:right;transform:scaleX(0.88);transform-origin:100% 50%;">18.446,85</div>
<div class="t" style="right:252.0999999999999px;top:477.90px;font-size:12.8px;line-height:20px;color:#222226;font-weight:400;letter-spacing:0px;text-align:right;transform:scaleX(0.88);transform-origin:100% 50%;">15.679,82</div>
<div class="t" style="right:104.09999999999991px;top:477.90px;font-size:12.8px;line-height:20px;color:#222226;font-weight:400;letter-spacing:0px;text-align:right;transform:scaleX(0.88);transform-origin:100% 50%;">641,62</div>
<div class="t" style="right:1283.1px;top:505.90px;font-size:12.8px;line-height:20px;color:#222226;font-weight:400;letter-spacing:0px;text-align:right;transform:scaleX(0.88);transform-origin:100% 50%;">2.023</div>
<div class="t" style="right:1187.1px;top:505.90px;font-size:12.8px;line-height:20px;color:#222226;font-weight:400;letter-spacing:0px;text-align:right;transform:scaleX(0.88);transform-origin:100% 50%;">10</div>
<div class="t" style="left:415px;top:505.90px;font-size:12.8px;line-height:20px;color:#222226;font-weight:400;letter-spacing:0px;transform:scaleX(0.88);transform-origin:0 50%;">30</div>
<div class="t" style="right:1026.1px;top:505.90px;font-size:12.8px;line-height:20px;color:#222226;font-weight:400;letter-spacing:0px;text-align:right;transform:scaleX(0.88);transform-origin:100% 50%;">18.446,85</div>
<div class="t" style="right:919.1px;top:505.90px;font-size:12.8px;line-height:20px;color:#222226;font-weight:400;letter-spacing:0px;text-align:right;transform:scaleX(0.88);transform-origin:100% 50%;">2.582,56</div>
<div class="t" style="right:812.1px;top:505.90px;font-size:12.8px;line-height:20px;color:#222226;font-weight:400;letter-spacing:0px;text-align:right;transform:scaleX(0.88);transform-origin:100% 50%;">184,47</div>
<div class="t" style="right:705.1px;top:505.90px;font-size:12.8px;line-height:20px;color:#222226;font-weight:400;letter-spacing:0px;text-align:right;transform:scaleX(0.88);transform-origin:100% 50%;">3.781,60</div>
<div class="t" style="right:598.1px;top:505.90px;font-size:12.8px;line-height:20px;color:#222226;font-weight:400;letter-spacing:0px;text-align:right;transform:scaleX(0.88);transform-origin:100% 50%;">368,94</div>
<div class="t" style="right:501.0999999999999px;top:505.90px;font-size:12.8px;line-height:20px;color:#222226;font-weight:400;letter-spacing:0px;text-align:right;transform:scaleX(0.88);transform-origin:100% 50%;">15.000,00</div>
<div class="t" style="right:365.0999999999999px;top:505.90px;font-size:12.8px;line-height:20px;color:#222226;font-weight:400;letter-spacing:0px;text-align:right;transform:scaleX(0.88);transform-origin:100% 50%;">18.446,85</div>
<div class="t" style="right:252.0999999999999px;top:505.90px;font-size:12.8px;line-height:20px;color:#222226;font-weight:400;letter-spacing:0px;text-align:right;transform:scaleX(0.88);transform-origin:100% 50%;">15.679,82</div>
<div class="t" style="right:104.09999999999991px;top:505.90px;font-size:12.8px;line-height:20px;color:#222226;font-weight:400;letter-spacing:0px;text-align:right;transform:scaleX(0.88);transform-origin:100% 50%;">641,62</div>
<div class="t" style="right:1283.1px;top:533.90px;font-size:12.8px;line-height:20px;color:#222226;font-weight:400;letter-spacing:0px;text-align:right;transform:scaleX(0.88);transform-origin:100% 50%;">2.023</div>
<div class="t" style="right:1187.1px;top:533.90px;font-size:12.8px;line-height:20px;color:#222226;font-weight:400;letter-spacing:0px;text-align:right;transform:scaleX(0.88);transform-origin:100% 50%;">11</div>
<div class="t" style="left:415px;top:533.90px;font-size:12.8px;line-height:20px;color:#222226;font-weight:400;letter-spacing:0px;transform:scaleX(0.88);transform-origin:0 50%;">30</div>
<div class="t" style="right:1026.1px;top:533.90px;font-size:12.8px;line-height:20px;color:#222226;font-weight:400;letter-spacing:0px;text-align:right;transform:scaleX(0.88);transform-origin:100% 50%;">19.071,40</div>
<div class="t" style="right:919.1px;top:533.90px;font-size:12.8px;line-height:20px;color:#222226;font-weight:400;letter-spacing:0px;text-align:right;transform:scaleX(0.88);transform-origin:100% 50%;">2.670,00</div>
<div class="t" style="right:812.1px;top:533.90px;font-size:12.8px;line-height:20px;color:#222226;font-weight:400;letter-spacing:0px;text-align:right;transform:scaleX(0.88);transform-origin:100% 50%;">190,71</div>
<div class="t" style="right:705.1px;top:533.90px;font-size:12.8px;line-height:20px;color:#222226;font-weight:400;letter-spacing:0px;text-align:right;transform:scaleX(0.88);transform-origin:100% 50%;">3.909,64</div>
<div class="t" style="right:598.1px;top:533.90px;font-size:12.8px;line-height:20px;color:#222226;font-weight:400;letter-spacing:0px;text-align:right;transform:scaleX(0.88);transform-origin:100% 50%;">381,43</div>
<div class="t" style="right:501.0999999999999px;top:533.90px;font-size:12.8px;line-height:20px;color:#222226;font-weight:400;letter-spacing:0px;text-align:right;transform:scaleX(0.88);transform-origin:100% 50%;">15.000,00</div>
<div class="t" style="right:365.0999999999999px;top:533.90px;font-size:12.8px;line-height:20px;color:#222226;font-weight:400;letter-spacing:0px;text-align:right;transform:scaleX(0.88);transform-origin:100% 50%;">19.071,40</div>
<div class="t" style="right:252.0999999999999px;top:533.90px;font-size:12.8px;line-height:20px;color:#222226;font-weight:400;letter-spacing:0px;text-align:right;transform:scaleX(0.88);transform-origin:100% 50%;">16.210,69</div>
<div class="t" style="right:104.09999999999991px;top:533.90px;font-size:12.8px;line-height:20px;color:#222226;font-weight:400;letter-spacing:0px;text-align:right;transform:scaleX(0.88);transform-origin:100% 50%;">1.167,75</div>
<div class="t" style="right:1283.1px;top:561.90px;font-size:12.8px;line-height:20px;color:#222226;font-weight:400;letter-spacing:0px;text-align:right;transform:scaleX(0.88);transform-origin:100% 50%;">2.023</div>
<div class="t" style="right:1187.1px;top:561.90px;font-size:12.8px;line-height:20px;color:#222226;font-weight:400;letter-spacing:0px;text-align:right;transform:scaleX(0.88);transform-origin:100% 50%;">12</div>
<div class="t" style="left:415px;top:561.90px;font-size:12.8px;line-height:20px;color:#222226;font-weight:400;letter-spacing:0px;transform:scaleX(0.88);transform-origin:0 50%;">30</div>
<div class="t" style="right:1026.1px;top:561.90px;font-size:12.8px;line-height:20px;color:#222226;font-weight:400;letter-spacing:0px;text-align:right;transform:scaleX(0.88);transform-origin:100% 50%;">30.654,41</div>
<div class="t" style="right:919.1px;top:561.90px;font-size:12.8px;line-height:20px;color:#222226;font-weight:400;letter-spacing:0px;text-align:right;transform:scaleX(0.88);transform-origin:100% 50%;">4.291,62</div>
<div class="t" style="right:812.1px;top:561.90px;font-size:12.8px;line-height:20px;color:#222226;font-weight:400;letter-spacing:0px;text-align:right;transform:scaleX(0.88);transform-origin:100% 50%;">306,54</div>
<div class="t" style="right:705.1px;top:561.90px;font-size:12.8px;line-height:20px;color:#222226;font-weight:400;letter-spacing:0px;text-align:right;transform:scaleX(0.88);transform-origin:100% 50%;">6.284,15</div>
<div class="t" style="right:598.1px;top:561.90px;font-size:12.8px;line-height:20px;color:#222226;font-weight:400;letter-spacing:0px;text-align:right;transform:scaleX(0.88);transform-origin:100% 50%;">613,09</div>
<div class="t" style="right:501.0999999999999px;top:561.90px;font-size:12.8px;line-height:20px;color:#222226;font-weight:400;letter-spacing:0px;text-align:right;transform:scaleX(0.88);transform-origin:100% 50%;">22.424,50</div>
<div class="t" style="right:365.0999999999999px;top:561.90px;font-size:12.8px;line-height:20px;color:#222226;font-weight:400;letter-spacing:0px;text-align:right;transform:scaleX(0.88);transform-origin:100% 50%;">30.654,41</div>
<div class="t" style="right:252.0999999999999px;top:561.90px;font-size:12.8px;line-height:20px;color:#222226;font-weight:400;letter-spacing:0px;text-align:right;transform:scaleX(0.88);transform-origin:100% 50%;">26.056,25</div>
<div class="t" style="right:104.09999999999991px;top:561.90px;font-size:12.8px;line-height:20px;color:#222226;font-weight:400;letter-spacing:0px;text-align:right;transform:scaleX(0.88);transform-origin:100% 50%;">3.500,90</div>
<div class="t" style="right:1283.1px;top:589.90px;font-size:12.8px;line-height:20px;color:#222226;font-weight:400;letter-spacing:0px;text-align:right;transform:scaleX(0.88);transform-origin:100% 50%;">2.024</div>
<div class="t" style="right:1187.1px;top:589.90px;font-size:12.8px;line-height:20px;color:#222226;font-weight:400;letter-spacing:0px;text-align:right;transform:scaleX(0.88);transform-origin:100% 50%;">1</div>
<div class="t" style="left:415px;top:589.90px;font-size:12.8px;line-height:20px;color:#222226;font-weight:400;letter-spacing:0px;transform:scaleX(0.88);transform-origin:0 50%;">30</div>
<div class="t" style="right:1026.1px;top:589.90px;font-size:12.8px;line-height:20px;color:#222226;font-weight:400;letter-spacing:0px;text-align:right;transform:scaleX(0.88);transform-origin:100% 50%;">31.189,75</div>
<div class="t" style="right:919.1px;top:589.90px;font-size:12.8px;line-height:20px;color:#222226;font-weight:400;letter-spacing:0px;text-align:right;transform:scaleX(0.88);transform-origin:100% 50%;">4.366,56</div>
<div class="t" style="right:812.1px;top:589.90px;font-size:12.8px;line-height:20px;color:#222226;font-weight:400;letter-spacing:0px;text-align:right;transform:scaleX(0.88);transform-origin:100% 50%;">311,90</div>
<div class="t" style="right:705.1px;top:589.90px;font-size:12.8px;line-height:20px;color:#222226;font-weight:400;letter-spacing:0px;text-align:right;transform:scaleX(0.88);transform-origin:100% 50%;">6.393,90</div>
<div class="t" style="right:598.1px;top:589.90px;font-size:12.8px;line-height:20px;color:#222226;font-weight:400;letter-spacing:0px;text-align:right;transform:scaleX(0.88);transform-origin:100% 50%;">623,79</div>
<div class="t" style="right:501.0999999999999px;top:589.90px;font-size:12.8px;line-height:20px;color:#222226;font-weight:400;letter-spacing:0px;text-align:right;transform:scaleX(0.88);transform-origin:100% 50%;">25.000,00</div>
<div class="t" style="right:365.0999999999999px;top:589.90px;font-size:12.8px;line-height:20px;color:#222226;font-weight:400;letter-spacing:0px;text-align:right;transform:scaleX(0.88);transform-origin:100% 50%;">31.189,75</div>
<div class="t" style="right:252.0999999999999px;top:589.90px;font-size:12.8px;line-height:20px;color:#222226;font-weight:400;letter-spacing:0px;text-align:right;transform:scaleX(0.88);transform-origin:100% 50%;">26.511,29</div>
<div class="t" style="right:104.09999999999991px;top:589.90px;font-size:12.8px;line-height:20px;color:#222226;font-weight:400;letter-spacing:0px;text-align:right;transform:scaleX(0.88);transform-origin:100% 50%;">1.426,37</div>
<div class="t" style="right:1283.1px;top:617.90px;font-size:12.8px;line-height:20px;color:#222226;font-weight:400;letter-spacing:0px;text-align:right;transform:scaleX(0.88);transform-origin:100% 50%;">2.024</div>
<div class="t" style="right:1187.1px;top:617.90px;font-size:12.8px;line-height:20px;color:#222226;font-weight:400;letter-spacing:0px;text-align:right;transform:scaleX(0.88);transform-origin:100% 50%;">2</div>
<div class="t" style="left:415px;top:617.90px;font-size:12.8px;line-height:20px;color:#222226;font-weight:400;letter-spacing:0px;transform:scaleX(0.88);transform-origin:0 50%;">30</div>
<div class="t" style="right:1026.1px;top:617.90px;font-size:12.8px;line-height:20px;color:#222226;font-weight:400;letter-spacing:0px;text-align:right;transform:scaleX(0.88);transform-origin:100% 50%;">31.189,75</div>
<div class="t" style="right:919.1px;top:617.90px;font-size:12.8px;line-height:20px;color:#222226;font-weight:400;letter-spacing:0px;text-align:right;transform:scaleX(0.88);transform-origin:100% 50%;">4.366,56</div>
<div class="t" style="right:812.1px;top:617.90px;font-size:12.8px;line-height:20px;color:#222226;font-weight:400;letter-spacing:0px;text-align:right;transform:scaleX(0.88);transform-origin:100% 50%;">311,90</div>
<div class="t" style="right:705.1px;top:617.90px;font-size:12.8px;line-height:20px;color:#222226;font-weight:400;letter-spacing:0px;text-align:right;transform:scaleX(0.88);transform-origin:100% 50%;">6.393,90</div>
<div class="t" style="right:598.1px;top:617.90px;font-size:12.8px;line-height:20px;color:#222226;font-weight:400;letter-spacing:0px;text-align:right;transform:scaleX(0.88);transform-origin:100% 50%;">623,79</div>
<div class="t" style="right:501.0999999999999px;top:617.90px;font-size:12.8px;line-height:20px;color:#222226;font-weight:400;letter-spacing:0px;text-align:right;transform:scaleX(0.88);transform-origin:100% 50%;">25.000,00</div>
<div class="t" style="right:365.0999999999999px;top:617.90px;font-size:12.8px;line-height:20px;color:#222226;font-weight:400;letter-spacing:0px;text-align:right;transform:scaleX(0.88);transform-origin:100% 50%;">31.189,75</div>
<div class="t" style="right:252.0999999999999px;top:617.90px;font-size:12.8px;line-height:20px;color:#222226;font-weight:400;letter-spacing:0px;text-align:right;transform:scaleX(0.88);transform-origin:100% 50%;">26.511,29</div>
<div class="t" style="right:104.09999999999991px;top:617.90px;font-size:12.8px;line-height:20px;color:#222226;font-weight:400;letter-spacing:0px;text-align:right;transform:scaleX(0.88);transform-origin:100% 50%;">1.426,37</div>
<div class="t" style="right:1283.1px;top:645.90px;font-size:12.8px;line-height:20px;color:#222226;font-weight:400;letter-spacing:0px;text-align:right;transform:scaleX(0.88);transform-origin:100% 50%;">2.024</div>
<div class="t" style="right:1187.1px;top:645.90px;font-size:12.8px;line-height:20px;color:#222226;font-weight:400;letter-spacing:0px;text-align:right;transform:scaleX(0.88);transform-origin:100% 50%;">3</div>
<div class="t" style="left:415px;top:645.90px;font-size:12.8px;line-height:20px;color:#222226;font-weight:400;letter-spacing:0px;transform:scaleX(0.88);transform-origin:0 50%;">30</div>
<div class="t" style="right:1026.1px;top:645.90px;font-size:12.8px;line-height:20px;color:#222226;font-weight:400;letter-spacing:0px;text-align:right;transform:scaleX(0.88);transform-origin:100% 50%;">40.189,75</div>
<div class="t" style="right:919.1px;top:645.90px;font-size:12.8px;line-height:20px;color:#222226;font-weight:400;letter-spacing:0px;text-align:right;transform:scaleX(0.88);transform-origin:100% 50%;">5.626,56</div>
<div class="t" style="right:812.1px;top:645.90px;font-size:12.8px;line-height:20px;color:#222226;font-weight:400;letter-spacing:0px;text-align:right;transform:scaleX(0.88);transform-origin:100% 50%;">401,90</div>
<div class="t" style="right:705.1px;top:645.90px;font-size:12.8px;line-height:20px;color:#222226;font-weight:400;letter-spacing:0px;text-align:right;transform:scaleX(0.88);transform-origin:100% 50%;">8.238,90</div>
<div class="t" style="right:598.1px;top:645.90px;font-size:12.8px;line-height:20px;color:#222226;font-weight:400;letter-spacing:0px;text-align:right;transform:scaleX(0.88);transform-origin:100% 50%;">803,79</div>
<div class="t" style="right:501.0999999999999px;top:645.90px;font-size:12.8px;line-height:20px;color:#222226;font-weight:400;letter-spacing:0px;text-align:right;transform:scaleX(0.88);transform-origin:100% 50%;">26.434,19</div>
<div class="t" style="right:365.0999999999999px;top:645.90px;font-size:12.8px;line-height:20px;color:#222226;font-weight:400;letter-spacing:0px;text-align:right;transform:scaleX(0.88);transform-origin:100% 50%;">40.189,75</div>
<div class="t" style="right:252.0999999999999px;top:645.90px;font-size:12.8px;line-height:20px;color:#222226;font-weight:400;letter-spacing:0px;text-align:right;transform:scaleX(0.88);transform-origin:100% 50%;">34.161,29</div>
<div class="t" style="right:104.09999999999991px;top:645.90px;font-size:12.8px;line-height:20px;color:#222226;font-weight:400;letter-spacing:0px;text-align:right;transform:scaleX(0.88);transform-origin:100% 50%;">2.573,87</div>
<div class="t" style="right:1283.1px;top:673.90px;font-size:12.8px;line-height:20px;color:#222226;font-weight:400;letter-spacing:0px;text-align:right;transform:scaleX(0.88);transform-origin:100% 50%;">2.024</div>
<div class="t" style="right:1187.1px;top:673.90px;font-size:12.8px;line-height:20px;color:#222226;font-weight:400;letter-spacing:0px;text-align:right;transform:scaleX(0.88);transform-origin:100% 50%;">4</div>
<div class="t" style="left:415px;top:673.90px;font-size:12.8px;line-height:20px;color:#222226;font-weight:400;letter-spacing:0px;transform:scaleX(0.88);transform-origin:0 50%;">28</div>
<div class="t" style="right:1026.1px;top:673.90px;font-size:12.8px;line-height:20px;color:#222226;font-weight:400;letter-spacing:0px;text-align:right;transform:scaleX(0.88);transform-origin:100% 50%;">37.985,87</div>
<div class="t" style="right:919.1px;top:673.90px;font-size:12.8px;line-height:20px;color:#222226;font-weight:400;letter-spacing:0px;text-align:right;transform:scaleX(0.88);transform-origin:100% 50%;">5.318,02</div>
<div class="t" style="right:812.1px;top:673.90px;font-size:12.8px;line-height:20px;color:#222226;font-weight:400;letter-spacing:0px;text-align:right;transform:scaleX(0.88);transform-origin:100% 50%;">379,86</div>
<div class="t" style="right:705.1px;top:673.90px;font-size:12.8px;line-height:20px;color:#222226;font-weight:400;letter-spacing:0px;text-align:right;transform:scaleX(0.88);transform-origin:100% 50%;">7.787,10</div>
<div class="t" style="right:598.1px;top:673.90px;font-size:12.8px;line-height:20px;color:#222226;font-weight:400;letter-spacing:0px;text-align:right;transform:scaleX(0.88);transform-origin:100% 50%;">759,72</div>
<div class="t" style="right:501.0999999999999px;top:673.90px;font-size:12.8px;line-height:20px;color:#222226;font-weight:400;letter-spacing:0px;text-align:right;transform:scaleX(0.88);transform-origin:100% 50%;">29.385,02</div>
<div class="t" style="right:365.0999999999999px;top:673.90px;font-size:12.8px;line-height:20px;color:#222226;font-weight:400;letter-spacing:0px;text-align:right;transform:scaleX(0.88);transform-origin:100% 50%;">37.985,87</div>
<div class="t" style="right:252.0999999999999px;top:673.90px;font-size:12.8px;line-height:20px;color:#222226;font-weight:400;letter-spacing:0px;text-align:right;transform:scaleX(0.88);transform-origin:100% 50%;">32.287,99</div>
<div class="t" style="right:104.09999999999991px;top:673.90px;font-size:12.8px;line-height:20px;color:#222226;font-weight:400;letter-spacing:0px;text-align:right;transform:scaleX(0.88);transform-origin:100% 50%;">2.766,47</div>
<div style="position:absolute;left:211px;top:791px;width:786px;height:4px;box-sizing:border-box;background:#9985c9;"></div>
<div style="position:absolute;left:936px;top:89px;width:161px;height:59.5px;box-sizing:border-box;border:12px solid #e53b30;border-bottom-width:10.5px;border-radius:21px;"></div>
<div style="position:absolute;left:761.5px;top:340.5px;width:527.5px;height:92.5px;box-sizing:border-box;background:#fff;border:5px solid #e53b30;border-radius:6px;"></div>
<div class="t" style="left:781.4px;top:357.60px;font-size:12.5px;line-height:20px;color:#38383d;font-weight:400;letter-spacing:0px;">Hesap Pusulası</div>
<div class="t" style="left:949.4px;top:357.60px;font-size:12.5px;line-height:20px;color:#38383d;font-weight:400;letter-spacing:0px;">Hesap Pusulası(Çoklu Seçim)</div>
<div class="t" style="left:1149px;top:357.60px;font-size:12.5px;line-height:20px;color:#38383d;font-weight:400;letter-spacing:0px;">Hesap Pusulası AGİ'li</div>
<div class="t" style="left:781.4px;top:393.90px;font-size:12.5px;line-height:20px;color:#38383d;font-weight:400;letter-spacing:0px;">Personel Bordro Raporu</div>
<div class="t" style="left:949.4px;top:393.90px;font-size:12.5px;line-height:20px;color:#38383d;font-weight:400;letter-spacing:0px;">Puantajlı Çoklu Bordro</div>
<div style="position:absolute;left:1259px;top:297px;width:65.5px;height:46.5px;box-sizing:border-box;border:5px solid #e53b30;border-radius:7px;"></div>
<div style="position:absolute;left:1287.2px;top:309px;width:32.2px;height:29.5px;box-sizing:border-box;border:5px solid #e53b30;border-radius:50%;"></div>
<svg style="position:absolute;left:0;top:0" width="1578" height="879" viewBox="0 0 1578 879"><path d="M0 877.7 H1578 V879 H0 Z M1578 867 A10.5 10.5 0 0 1 1567.5 877.7 H1578 Z M0 874.5 A4 4 0 0 0 5 877.7 H0 Z" fill="#555"/></svg>
</body></html>
